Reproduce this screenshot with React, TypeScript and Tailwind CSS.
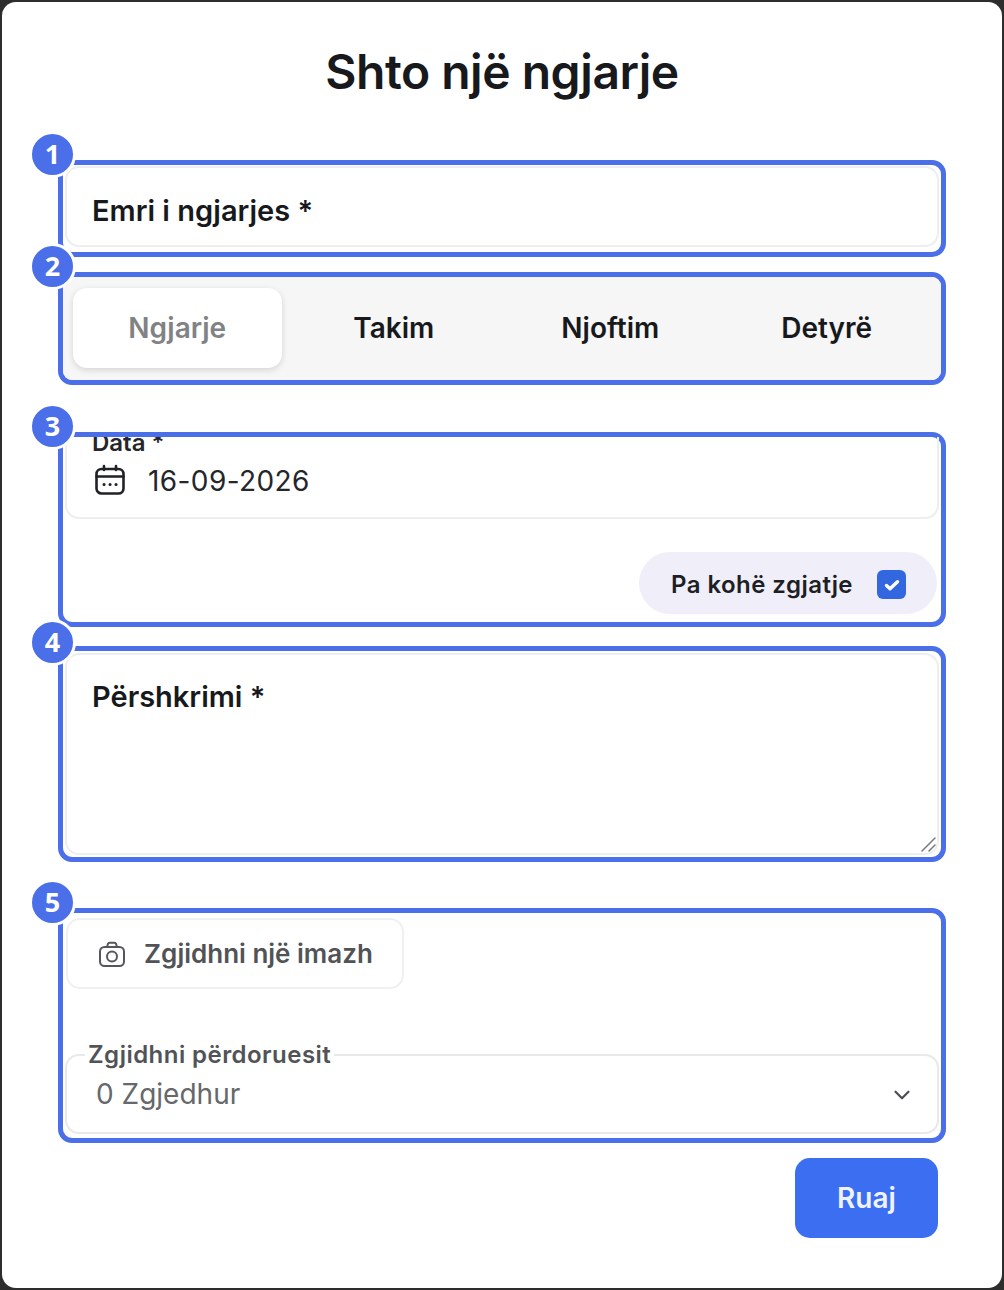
import { ChevronDown } from "lucide-react";
import { ReactNode } from "react";

const tabs = ["Ngjarje", "Takim", "Njoftim", "Detyrë"];

function Marked({ n, className, badgeTop = "top-[-34px]", children }: { n: number; className: string; badgeTop?: string; children: ReactNode }) {
  return (
    <section className={`relative rounded-[14px] border-[5px] border-[#4a6fe8] ${className}`}>
      <span className={`absolute left-[-34px] z-10 flex h-[47px] w-[47px] items-center justify-center rounded-full border-[3px] border-white bg-[#4a6fe8] text-[27px] font-bold text-white [font-family:'Open_Sans',sans-serif] ${badgeTop}`}>
        {n}
      </span>
      {children}
    </section>
  );
}

function CalendarIcon() {
  return (
    <svg viewBox="0 0 32 32" className="h-[32px] w-[32px]" fill="none" stroke="#1f2227" strokeWidth="2.6" strokeLinecap="round">
      <rect x="2.5" y="5" width="27" height="24.5" rx="5" />
      <path d="M2.5 12.5h27M10 2v4M22 2v4" />
      <path d="M10 20.5h.1M16 20.5h.1M22 20.5h.1" strokeWidth="3" />
    </svg>
  );
}

function CameraIcon() {
  return (
    <svg viewBox="0 0 28 28" className="h-[28px] w-[28px]" fill="none" stroke="#55575a" strokeWidth="2" strokeLinecap="round" strokeLinejoin="round">
      <rect x="2" y="7" width="24" height="19" rx="4.5" />
      <path d="M9 7l1-3.2a1.5 1.5 0 0 1 1.4-1h5.2a1.5 1.5 0 0 1 1.4 1L19 7" />
      <circle cx="14" cy="16.5" r="5" />
    </svg>
  );
}

export default function App() {
  return (
    <div className="h-[1290px] w-[1004px] overflow-hidden bg-[#2d2d2d] p-[2px] [font-family:Inter,sans-serif]">
      <div className="h-[1286px] w-[1000px] rounded-[14px] bg-white px-[56px]">
        <h1 className="flex h-[140px] items-center justify-center text-[48px] font-semibold tracking-[-0.5px] text-[#17191c]">
          Shto një ngjarje
        </h1>

        <Marked n={1} className="mt-[18px] h-[97px]">
          <div className="mx-[2px] mt-[1px] flex h-[81px] items-center rounded-[14px] border-2 border-[#eceef0] pl-[25px] pt-[9px] text-[29px] font-semibold text-[#17191c]">
            Emri i ngjarjes *
          </div>
        </Marked>

        <Marked n={2} className="mt-[15px] h-[113px]">
          <div className="grid h-[103px] grid-cols-4 items-center gap-[8px] rounded-[9px] bg-[#f6f6f7] px-[10px] pb-[2px] text-center text-[28px] font-semibold text-[#17191c]">
            {tabs.map((tab, i) => (
              <div
                key={tab}
                className={i === 0 ? "flex h-[80px] items-center justify-center rounded-[14px] bg-white text-[#808285] shadow-[0_2px_6px_rgba(0,0,0,0.14)]" : ""}
              >
                {tab}
              </div>
            ))}
          </div>
        </Marked>

        <Marked n={3} className="mt-[47px] h-[195px]">
          <div className="mx-[2px] h-[82px] overflow-hidden rounded-b-[14px] border-x-2 border-b-2 border-[#eceef0] px-[24px]">
            <div className="ml-[1px] mt-[-6px] h-[24px] text-[24px] font-semibold leading-[24px] text-[#24262a]">Data *</div>
            <div className="mt-[8px] flex items-center gap-[22px]">
              <span className="ml-[3px] mt-[-2px]"><CalendarIcon /></span>
              <span className="text-[28px] leading-[36px] tracking-[0.4px] text-[#24262a]">16-09-2026</span>
            </div>
          </div>
          <div className="mt-[33px] flex justify-end pr-[4px]">
            <label className="flex h-[62px] w-[298px] items-center rounded-full bg-[#f0eef8] pl-[32px] pt-[3px] text-[24px] font-semibold tracking-[0.45px] text-[#1d1f24]">
              Pa kohë zgjatje
              <span className="ml-[24px] flex h-[29px] w-[29px] items-center justify-center rounded-[6px] bg-[#3367e0]">
                <svg viewBox="0 0 20 20" className="h-[20px] w-[20px]" fill="none" stroke="white" strokeWidth="3.4" strokeLinecap="round" strokeLinejoin="round">
                  <path d="M4.5 10.5l3.5 3.2 7.5-7" />
                </svg>
              </span>
            </label>
          </div>
        </Marked>

        <Marked n={4} className="mt-[19px] h-[216px]" badgeTop="top-[-32px]">
          <div className="relative mx-[2px] mt-[2px] h-[202px] rounded-[14px] border-2 border-[#eceef0] px-[25px] pt-[24px] text-[29px] font-semibold leading-[36px] text-[#17191c]">
            Përshkrimi *
            <svg viewBox="0 0 16 16" className="absolute bottom-[1px] right-[1px] h-[16px] w-[16px]" stroke="#77797c" strokeWidth="1.5" strokeLinecap="round">
              <path d="M2 15L15 2M9 15l6-6" />
            </svg>
          </div>
        </Marked>

        <Marked n={5} className="mt-[46px] h-[235px]">
          <div className="ml-[3px] mt-[5px] flex h-[71px] w-[338px] items-center gap-[18px] rounded-[14px] border-2 border-[#eff0f1] pl-[30px] text-[26px] font-semibold text-[#515356]">
            <CameraIcon />
            Zgjidhni një imazh
          </div>
          <fieldset className="relative mx-[2px] mt-[51px] h-[94px] rounded-[14px] border-2 border-[#e8e9eb] px-[18px]">
            <legend className="px-[3px] text-[24px] font-semibold leading-[29px] tracking-[0.45px] text-[#515356]">Zgjidhni përdoruesit</legend>
            <div className="mt-[7px] pl-[11px] text-[28px] leading-[36px] text-[#66686b]">0 Zgjedhur</div>
            <ChevronDown className="absolute right-[22px] top-[13px] h-[26px] w-[26px] text-[#4a4c50]" strokeWidth={2} />
          </fieldset>
        </Marked>

        <div className="mt-[15px] flex justify-end pr-[8px]">
          <button className="h-[80px] w-[143px] rounded-[15px] bg-[#3b6ef0] text-[28px] font-semibold text-[#eef3ff]">Ruaj</button>
        </div>
      </div>
    </div>
  );
}
